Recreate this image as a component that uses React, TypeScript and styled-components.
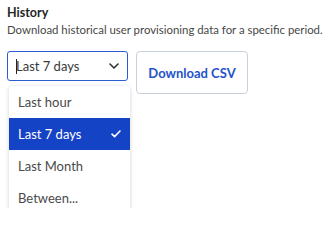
import styled, { createGlobalStyle } from "styled-components";

const Global = createGlobalStyle`
  body {
    margin: 0;
    background: #ffffff;
    font-family: "Lato", "Liberation Sans", sans-serif;
  }
`;

const Page = styled.div`
  box-sizing: border-box;
  height: 208px;
  padding: 5px 7px;
`;

const Title = styled.h3`
  margin: 0;
  font-size: 12.5px;
  font-weight: 700;
  color: #262626;
  line-height: 16px;
`;

const Subtitle = styled.p`
  margin: 1px 0 0;
  font-size: 11.4px;
  color: #474747;
  line-height: 16px;
  white-space: nowrap;
`;

const Row = styled.div`
  display: flex;
  align-items: flex-start;
  gap: 8px;
  margin-top: 13px;
`;

const SelectWrap = styled.div`
  position: relative;
  width: 121px;
`;

const SelectBox = styled.div`
  box-sizing: border-box;
  height: 30px;
  display: flex;
  align-items: center;
  justify-content: space-between;
  padding: 0 8px;
  border: 1px solid #2d5bd4;
  border-radius: 3px;
  font-size: 13px;
  color: #3a3a3a;
`;

const Value = styled.span`
  display: flex;
  align-items: center;
`;

const Caret = styled.span`
  width: 1px;
  height: 15px;
  background: #222;
  margin-right: -1px;
`;

const Menu = styled.ul`
  position: absolute;
  top: 35px;
  left: 2px;
  width: 121px;
  margin: 0;
  padding: 0;
  list-style: none;
  background: #fff;
  border-radius: 3px;
  box-shadow: 0 1px 4px rgba(0, 0, 0, 0.18);
`;

const Item = styled.li<{ $active?: boolean }>`
  display: flex;
  align-items: center;
  justify-content: space-between;
  height: 32px;
  padding: 0 9px;
  font-size: 13px;
  color: ${(p) => (p.$active ? "#ffffff" : "#4a4a4a")};
  background: ${(p) => (p.$active ? "#1543c6" : "transparent")};
`;

const Button = styled.button`
  box-sizing: border-box;
  width: 112px;
  height: 43px;
  border: 1px solid #c8d0de;
  border-radius: 4px;
  background: #fff;
  color: #2453c9;
  font-family: inherit;
  font-size: 13px;
  font-weight: 700;
`;

const Chevron = () => (
  <svg width="10" height="6" viewBox="0 0 10 6">
    <path d="M1 1l4 4 4-4" fill="none" stroke="#333" strokeWidth="1.6" strokeLinecap="round" strokeLinejoin="round" />
  </svg>
);

const Check = () => (
  <svg width="10" height="8" viewBox="0 0 10 8">
    <path d="M1 4.2l2.6 2.4L9 1" fill="none" stroke="#fff" strokeWidth="1.6" strokeLinecap="round" strokeLinejoin="round" />
  </svg>
);

export default function App() {
  return (
    <Page>
      <Global />
      <Title>History</Title>
      <Subtitle>Download historical user provisioning data for a specific period.</Subtitle>
      <Row>
        <SelectWrap>
          <SelectBox>
            <Value>
              <Caret />
              Last 7 days
            </Value>
            <Chevron />
          </SelectBox>
          <Menu>
            <Item>Last hour</Item>
            <Item $active>
              Last 7 days
              <Check />
            </Item>
            <Item>Last Month</Item>
            <Item>Between...</Item>
          </Menu>
        </SelectWrap>
        <Button>Download CSV</Button>
      </Row>
    </Page>
  );
}
